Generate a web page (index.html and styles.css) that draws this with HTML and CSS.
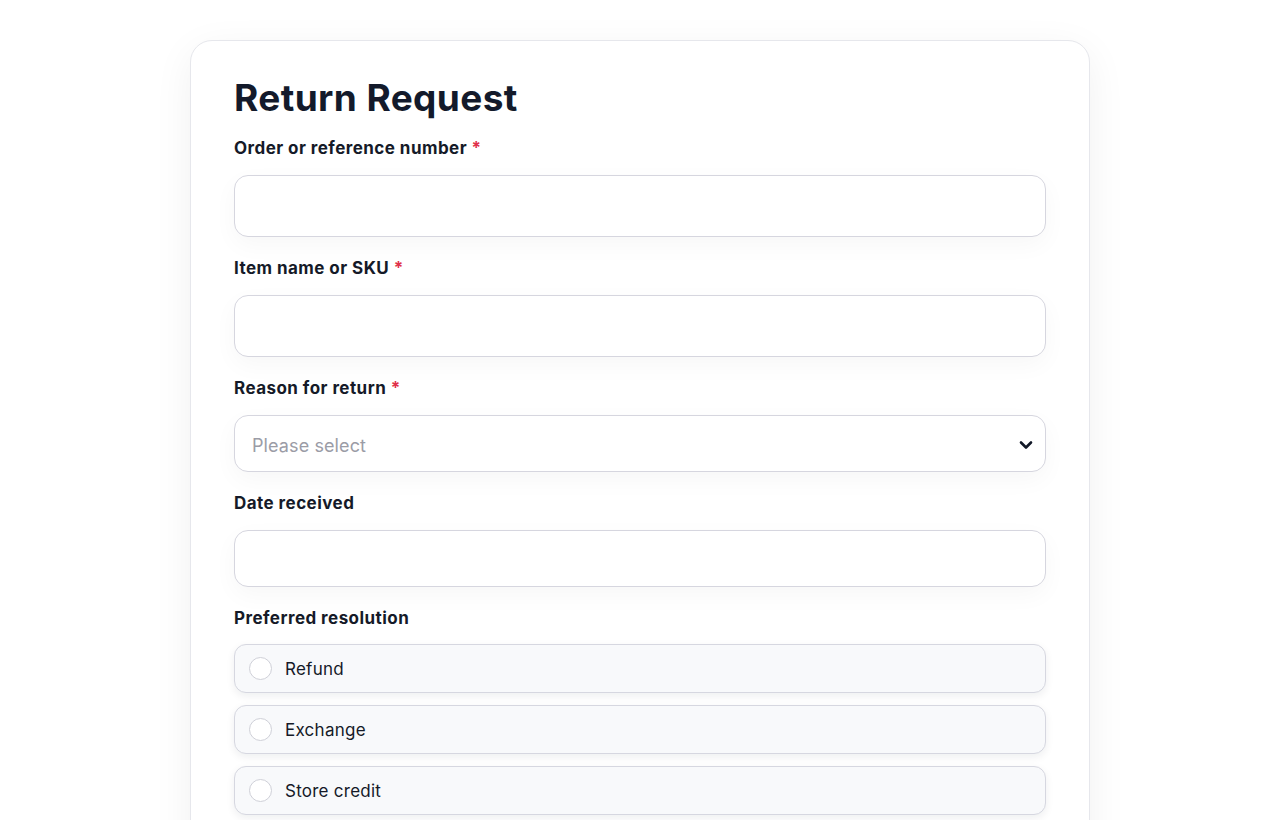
FILE: index.html
```html
<!DOCTYPE html>
<html lang="en">
<head>
<meta charset="utf-8">
<title>Return Request</title>
<link rel="stylesheet" href="styles.css">
</head>
<body>
<main class="card">
  <h1 class="title">Return Request</h1>
  <form class="form">
    <div class="field">
      <label class="label" for="order">Order or reference number <span class="req">*</span></label>
      <input class="input input-tall" id="order" type="text">
    </div>
    <div class="field">
      <label class="label" for="item">Item name or SKU <span class="req">*</span></label>
      <input class="input input-tall" id="item" type="text">
    </div>
    <div class="field">
      <label class="label" for="reason">Reason for return <span class="req">*</span></label>
      <div class="select">
        <span class="placeholder">Please select</span>
        <svg class="chevron" width="14" height="10" viewBox="0 0 14 10" aria-hidden="true"><path d="M2 2.5 L7 7.5 L12 2.5" fill="none" stroke="#111827" stroke-width="2.6" stroke-linecap="round" stroke-linejoin="round"/></svg>
      </div>
    </div>
    <div class="field">
      <label class="label" for="date">Date received</label>
      <input class="input" id="date" type="text">
    </div>
    <div class="field field-options">
      <span class="label">Preferred resolution</span>
      <div class="options">
        <div class="option"><span class="radio"></span><span class="option-text">Refund</span></div>
        <div class="option"><span class="radio"></span><span class="option-text">Exchange</span></div>
        <div class="option"><span class="radio"></span><span class="option-text">Store credit</span></div>
      </div>
    </div>
  </form>
</main>
</body>
</html>
```

FILE: styles.css
```css
* { box-sizing: border-box; }
html, body { margin: 0; padding: 0; background: #ffffff; }
body {
  font-family: Inter, "Noto Sans", sans-serif;
  color: #141824;
  padding-top: 40px;
}
.card {
  width: 900px;
  margin: 0 auto;
  background: #fff;
  border: 1px solid #e6e7ec;
  border-radius: 22px;
  padding: 35px 43px 40px;
  box-shadow: 0 10px 40px rgba(20, 24, 40, 0.06);
  min-height: 900px;
}
.title {
  margin: 0;
  font-size: 37px;
  line-height: 44px;
  font-weight: 700;
  color: #131a2b;
  letter-spacing: 0.4px;
}
.form {
  display: flex;
  flex-direction: column;
  gap: 19px;
  margin-top: 16px;
}
.field {
  display: flex;
  flex-direction: column;
  gap: 15px;
}
.field-options { gap: 14px; }
.label {
  display: block;
  font-size: 17px;
  line-height: 24px;
  font-weight: 700;
  color: #151a28;
  letter-spacing: 0.45px;
}
.req { color: #e0314b; }
.input {
  width: 100%;
  height: 57px;
  border: 1px solid #d6d6df;
  border-radius: 14px;
  background: #fff;
  box-shadow: 0 8px 24px rgba(20, 24, 40, 0.035);
  font: inherit;
  outline: none;
}
.input-tall { height: 62px; }
.select {
  height: 57px;
  border: 1px solid #d6d6df;
  border-radius: 14px;
  background: #fff;
  box-shadow: 0 8px 24px rgba(20, 24, 40, 0.035);
  display: flex;
  align-items: center;
  justify-content: space-between;
  padding: 3px 12px 0 17px;
}
.placeholder {
  font-size: 18px;
  color: #9b9ca6;
  letter-spacing: 0.1px;
}
.chevron { display: block; }
.options {
  display: flex;
  flex-direction: column;
  gap: 12px;
}
.option {
  height: 49px;
  border: 1px solid #d6d7e0;
  border-radius: 12px;
  background: #f8f9fb;
  box-shadow: 0 3px 8px rgba(20, 24, 40, 0.07);
  display: flex;
  align-items: center;
  padding-left: 14px;
  gap: 13px;
}
.radio {
  width: 23px;
  height: 23px;
  border-radius: 50%;
  border: 1px solid #cfd0d8;
  background: #fff;
  flex: none;
}
.option-text {
  font-size: 17px;
  color: #151a28;
  letter-spacing: 0.25px;
  padding-top: 1px;
}
```
